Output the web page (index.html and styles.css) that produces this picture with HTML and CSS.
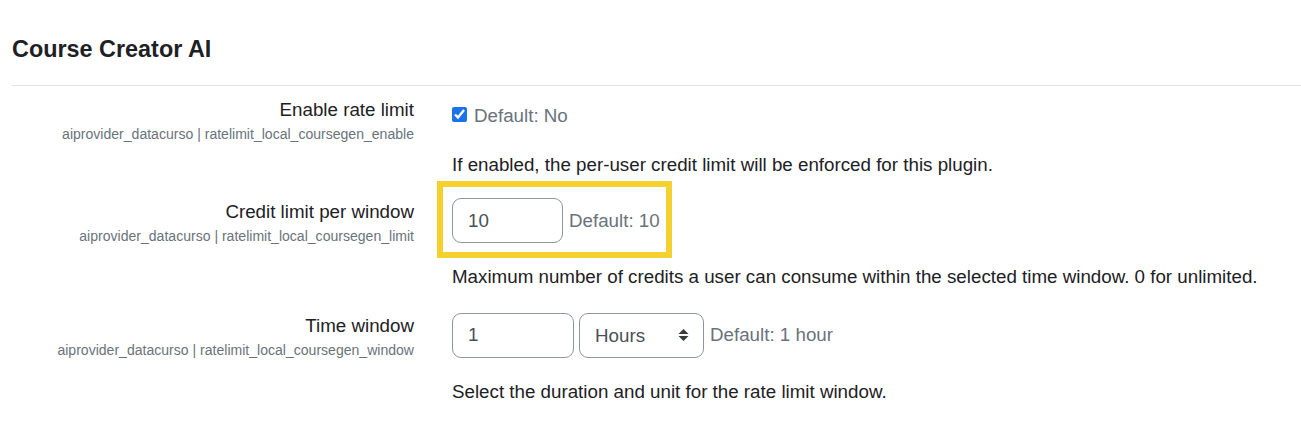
FILE: index.html
```html
<!DOCTYPE html>
<html lang="en">
<head>
<meta charset="utf-8">
<title>Course Creator AI</title>
<link rel="stylesheet" href="styles.css">
</head>
<body>
<div class="page">
  <h3 class="section-title">Course Creator AI</h3>
  <div class="settings">
    <div class="setting setting-check">
      <div class="setting-label">
        <div class="label-text">Enable rate limit</div>
        <div class="shortname">aiprovider_datacurso | ratelimit_local_coursegen_enable</div>
      </div>
      <div class="setting-body">
        <div class="control-line check-line">
          <input type="checkbox" class="checkbox" checked>
          <span class="default-text">Default: No</span>
        </div>
        <div class="description">If enabled, the per-user credit limit will be enforced for this plugin.</div>
      </div>
    </div>

    <div class="setting">
      <div class="setting-label">
        <div class="label-text">Credit limit per window</div>
        <div class="shortname">aiprovider_datacurso | ratelimit_local_coursegen_limit</div>
      </div>
      <div class="setting-body">
        <div class="control-line highlight-wrap">
          <input type="text" class="text-input input-short" value="10">
          <span class="default-text">Default: 10</span>
          <div class="highlight"></div>
        </div>
        <div class="description">Maximum number of credits a user can consume within the selected time window. 0 for unlimited.</div>
      </div>
    </div>

    <div class="setting">
      <div class="setting-label">
        <div class="label-text">Time window</div>
        <div class="shortname">aiprovider_datacurso | ratelimit_local_coursegen_window</div>
      </div>
      <div class="setting-body">
        <div class="control-line">
          <input type="text" class="text-input input-mid" value="1">
          <div class="select-wrap">
            <select class="select">
              <option>Hours</option>
            </select>
            <svg class="select-arrow" width="11" height="14" viewBox="0 0 11 14" aria-hidden="true">
              <path d="M0.5 6 L5.5 1 L10.5 6 Z" fill="#343a40"/>
              <path d="M0.5 8 L5.5 13 L10.5 8 Z" fill="#343a40"/>
            </svg>
          </div>
          <span class="default-text">Default: 1 hour</span>
        </div>
        <div class="description">Select the duration and unit for the rate limit window.</div>
      </div>
    </div>
  </div>
</div>
</body>
</html>
```

FILE: styles.css
```css
html, body {
  margin: 0;
  padding: 0;
  background: #ffffff;
}

body {
  font-family: "Liberation Sans", Arial, sans-serif;
  font-size: 18.75px;
  line-height: 1.5;
  color: #1d2125;
}

.page {
  padding: 0 0 0 12px;
}

.section-title {
  margin: 0;
  padding-top: 35px;
  font-size: 23.4px;
  line-height: 28px;
  font-weight: 700;
  color: #1d2125;
  padding-bottom: 22px;
  border-bottom: 1px solid #dee2e6;
}

.settings {
  padding-top: 10px;
}

.setting {
  display: grid;
  grid-template-columns: 402px 1fr;
  column-gap: 38px;
  margin-bottom: 21px;
}

.setting-check {
  margin-bottom: 19px;
}

.setting-label {
  text-align: right;
}

.label-text {
  line-height: 28px;
  color: #1d2125;
}

.shortname {
  font-size: 14.06px;
  line-height: 21px;
  color: #6a737b;
}

.control-line {
  display: flex;
  align-items: center;
  line-height: 28px;
}

.check-line {
  padding-top: 6px;
}

.checkbox {
  width: 15px;
  height: 15px;
  margin: 0 7px 3px 0;
  accent-color: #1a73e8;
}

.default-text {
  color: #6a737b;
  margin-left: 6px;
}

.check-line .default-text {
  margin-left: 0;
}

.description {
  margin-top: 20px;
  line-height: 28px;
}

.setting-check .description {
  margin-top: 21px;
}

.text-input {
  box-sizing: border-box;
  height: 45px;
  padding: 7px 15px;
  border: 1px solid #8f959e;
  border-radius: 9px;
  font-family: inherit;
  font-size: 18.75px;
  color: #495057;
  background: #ffffff;
  margin: 0;
}

.input-short {
  width: 111px;
}

.input-mid {
  width: 122px;
}

.highlight-wrap {
  position: relative;
}

.highlight {
  position: absolute;
  left: -15px;
  top: -17px;
  width: 235px;
  height: 77px;
  box-sizing: border-box;
  border: 6px solid #f4d12f;
  pointer-events: none;
}

.select-wrap {
  position: relative;
  margin-left: 5px;
  display: flex;
}

.select {
  appearance: none;
  -webkit-appearance: none;
  box-sizing: border-box;
  width: 125px;
  height: 45px;
  margin: 1px 0 0;
  padding: 7px 40px 7px 15px;
  border: 1px solid #8f959e;
  border-radius: 9px;
  font-family: inherit;
  font-size: 18.75px;
  color: #495057;
  background: #ffffff;
}

.select-arrow {
  position: absolute;
  right: 15px;
  top: 16px;
  pointer-events: none;
}
```
